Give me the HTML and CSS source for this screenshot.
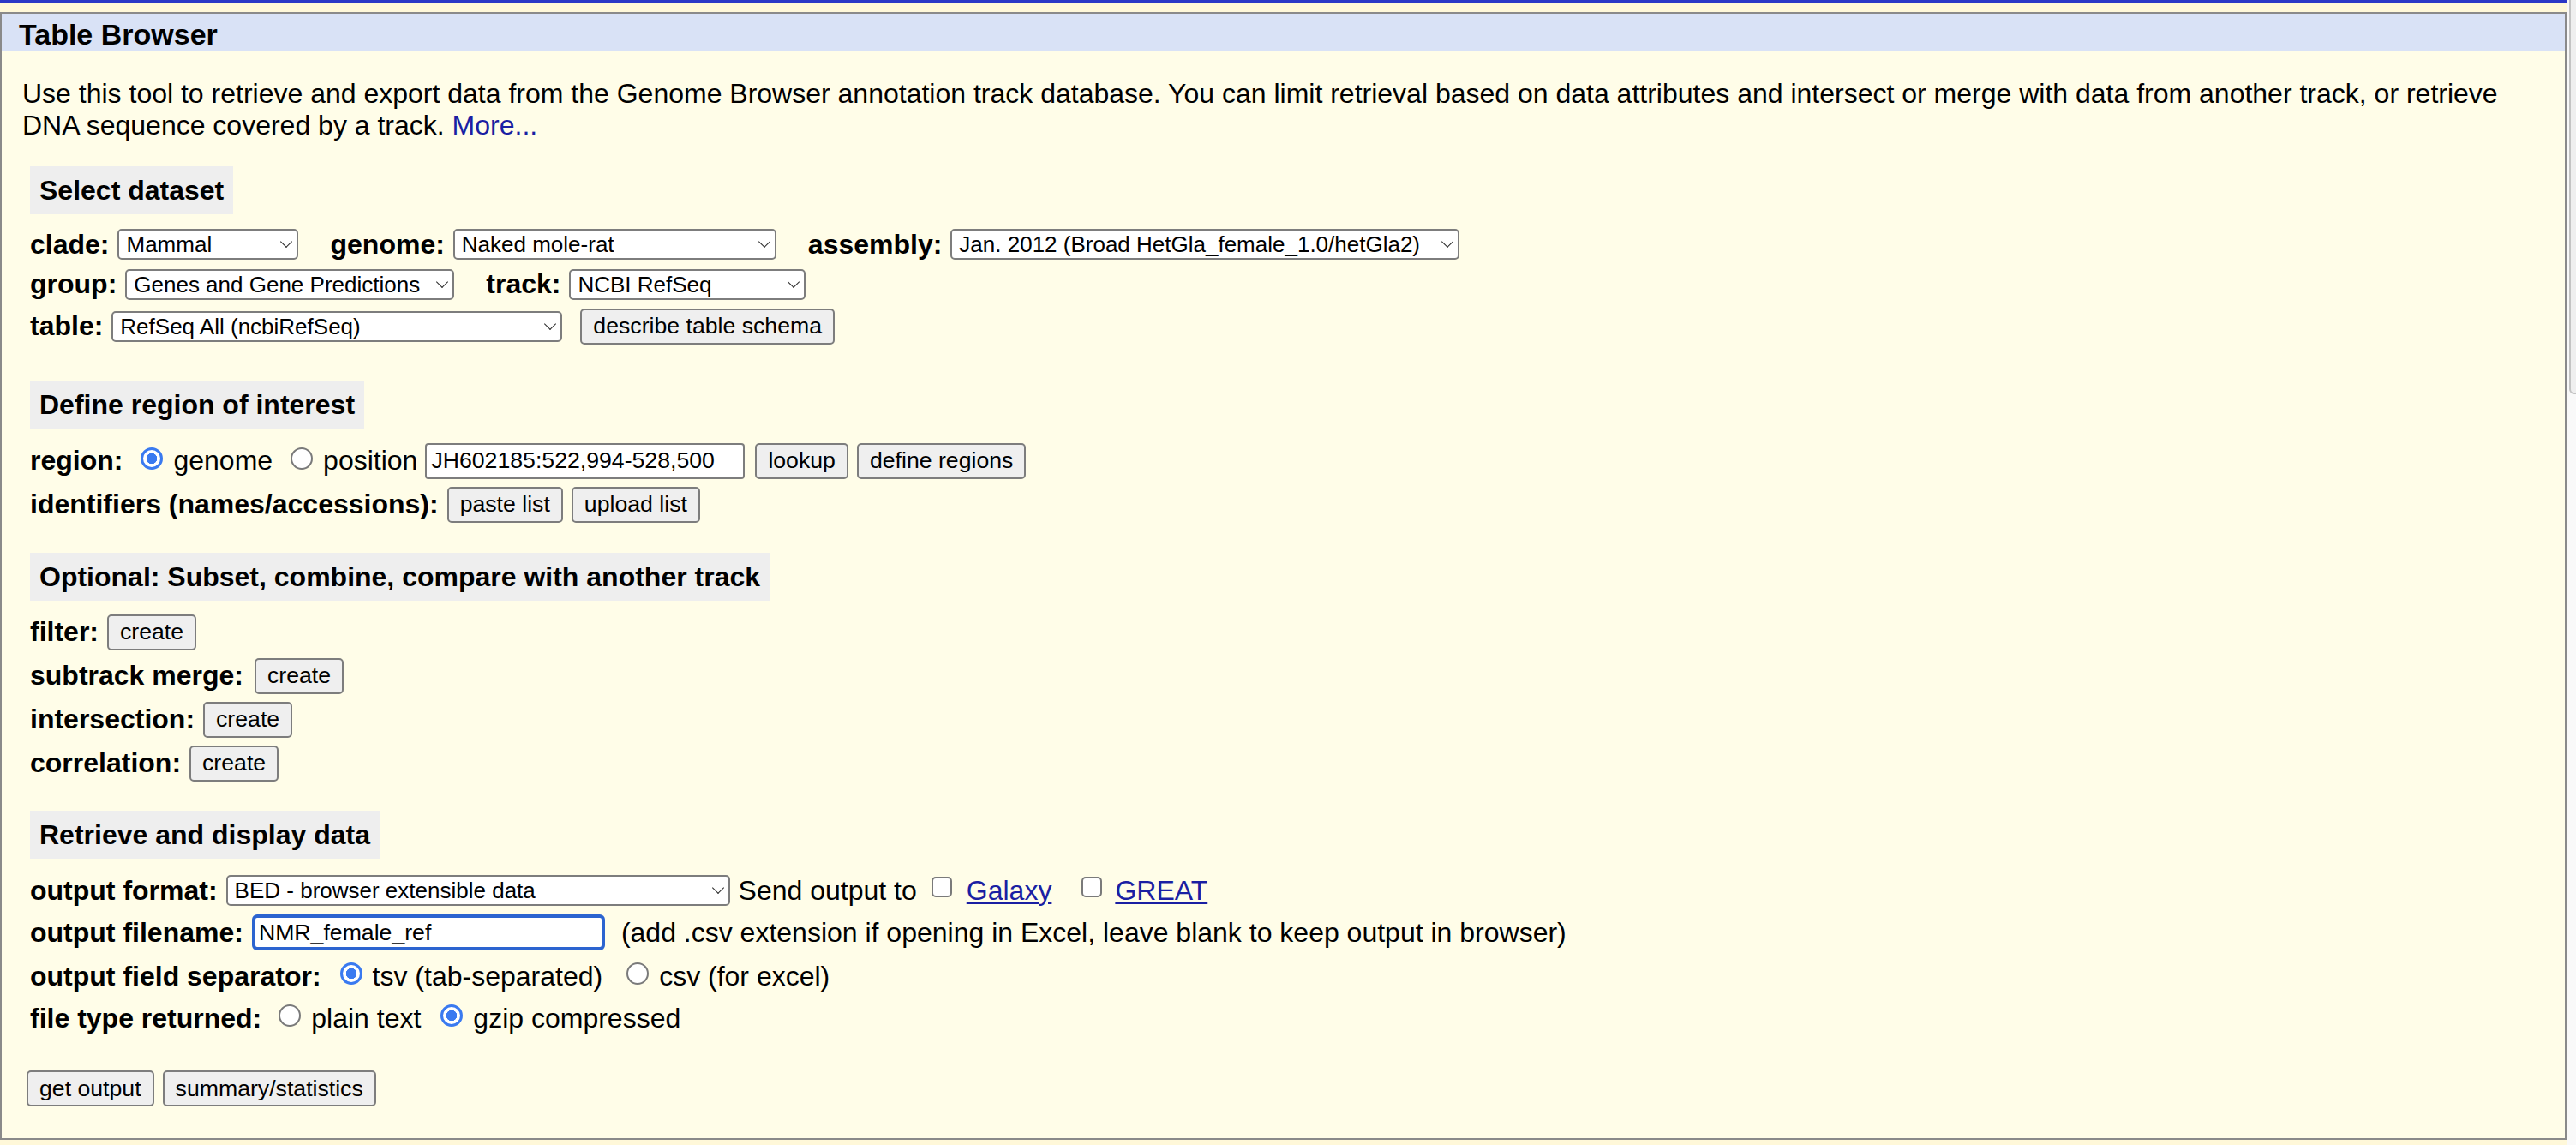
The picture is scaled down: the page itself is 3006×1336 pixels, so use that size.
FILE: index.html
```html
<!DOCTYPE html>
<html lang="en">
<head>
<meta charset="utf-8">
<title>Table Browser</title>
<link rel="stylesheet" href="styles.css">
</head>
<body>
<div class="page">
  <div class="main">
    <div class="topbar"></div>
    <div class="panel">
      <div class="panel-head">Table Browser</div>
      <div class="panel-body">
        <p class="intro">Use this tool to retrieve and export data from the Genome Browser annotation track database. You can limit retrieval based on data attributes and intersect or merge with data from another track, or retrieve DNA sequence covered by a track. <a href="#">More...</a></p>

        <section class="section s1">
          <div class="title">Select dataset</div>
          <div class="rows">
            <div class="row h46">
              <span class="lbl">clade:</span>
              <span class="sel w-clade"><select><option>Mammal</option></select></span>
              <span class="lbl sp">genome:</span>
              <span class="sel w-genome"><select><option>Naked mole-rat</option></select></span>
              <span class="lbl sp">assembly:</span>
              <span class="sel w-assembly"><select><option>Jan. 2012 (Broad HetGla_female_1.0/hetGla2)</option></select></span>
            </div>
            <div class="row h47">
              <span class="lbl">group:</span>
              <span class="sel w-group"><select><option>Genes and Gene Predictions</option></select></span>
              <span class="lbl sp">track:</span>
              <span class="sel w-track"><select><option>NCBI RefSeq</option></select></span>
            </div>
            <div class="row h51">
              <span class="lbl">table:</span>
              <span class="sel w-table"><select><option>RefSeq All (ncbiRefSeq)</option></select></span>
              <button class="btn after-sel" type="button">describe table schema</button>
            </div>
          </div>
        </section>

        <section class="section s2">
          <div class="title">Define region of interest</div>
          <div class="rows">
            <div class="row h51">
              <span class="lbl">region:</span>
              <input class="radio" type="radio" name="region" checked>
              <span class="opt">genome</span>
              <input class="radio radio-pos" type="radio" name="region">
              <span class="opt">position</span>
              <input class="txt w-pos" type="text" value="JH602185:522,994-528,500">
              <button class="btn after-txt" type="button">lookup</button>
              <button class="btn" type="button">define regions</button>
            </div>
            <div class="row h51">
              <span class="lbl">identifiers (names/accessions):</span>
              <button class="btn" type="button">paste list</button>
              <button class="btn" type="button">upload list</button>
            </div>
          </div>
        </section>

        <section class="section s3">
          <div class="title">Optional: Subset, combine, compare with another track</div>
          <div class="rows rows-opt">
            <div class="row h51">
              <span class="lbl">filter:</span>
              <button class="btn" type="button">create</button>
            </div>
            <div class="row h51">
              <span class="lbl lbl-wide">subtrack merge:</span>
              <button class="btn" type="button">create</button>
            </div>
            <div class="row h51">
              <span class="lbl">intersection:</span>
              <button class="btn" type="button">create</button>
            </div>
            <div class="row h51">
              <span class="lbl">correlation:</span>
              <button class="btn" type="button">create</button>
            </div>
          </div>
        </section>

        <section class="section s4">
          <div class="title">Retrieve and display data</div>
          <div class="rows rows-out">
            <div class="row h48">
              <span class="lbl">output format:</span>
              <span class="sel w-format"><select><option>BED - browser extensible data</option></select></span>
              <span class="send">Send output to</span>
              <input class="chk" type="checkbox">
              <a class="ext ext-first" href="#">Galaxy</a>
              <input class="chk chk-tight" type="checkbox">
              <a class="ext" href="#">GREAT</a>
            </div>
            <div class="row h50">
              <span class="lbl">output filename:</span>
              <input class="txt focus" type="text" value="NMR_female_ref">
              <span class="note">(add .csv extension if opening in Excel, leave blank to keep output in browser)</span>
            </div>
            <div class="row h52">
              <span class="lbl">output field separator:</span>
              <input class="radio radio-a" type="radio" name="sep" checked>
              <span class="opt">tsv (tab-separated)</span>
              <input class="radio radio-b" type="radio" name="sep">
              <span class="opt">csv (for excel)</span>
            </div>
            <div class="row h46">
              <span class="lbl">file type returned:</span>
              <input class="radio radio-c" type="radio" name="ftype">
              <span class="opt">plain text</span>
              <input class="radio radio-d" type="radio" name="ftype" checked>
              <span class="opt">gzip compressed</span>
            </div>
          </div>
        </section>

        <div class="actions">
          <button class="btn" type="button">get output</button>
          <button class="btn" type="button">summary/statistics</button>
        </div>
      </div>
    </div>
  </div>
  <div class="scroll"><div class="thumb"></div></div>
</div>
</body>
</html>
```

FILE: styles.css
```css
* { box-sizing: border-box; }

html, body {
  margin: 0;
  padding: 0;
}

body {
  background: #fff8d9;
  color: #000;
  font-family: "Liberation Sans", Arial, Helvetica, sans-serif;
  font-size: 32px;
}

.page {
  display: flex;
  height: 100vh;
}

.main {
  flex: 1;
  min-width: 0;
  display: flex;
  flex-direction: column;
}

.topbar {
  flex: none;
  height: 4px;
  background: #2b37c6;
}

.panel {
  flex: 1;
  margin: 10px 0 6px;
  border: 2px solid #8a8a8a;
  background: #fffde8;
  overflow: hidden;
}

.panel-head {
  height: 44px;
  padding: 4px 0 0 20px;
  background: #d9e2f6;
  font-size: 34px;
  font-weight: bold;
  line-height: 40px;
}

.panel-body {
  padding: 0 22px 0 24px;
}

.intro {
  margin: 31px 0 0;
  line-height: normal;
}

a { color: #1a1fa3; }
.intro a { text-decoration: none; }

.section { margin-left: 9px; }
.s1 { margin-top: 29px; }
.s2 { margin-top: 38px; }
.s3 { margin-top: 31px; }
.s4 { margin-top: 30px; }

.title {
  width: fit-content;
  height: 56px;
  padding: 0 11px;
  background: #eeeeee;
  font-weight: bold;
  line-height: 56px;
  white-space: nowrap;
}

.rows { margin-top: 12px; }
.rows-opt { margin-top: 11px; }
.rows-out { margin-top: 13px; }

.row {
  display: flex;
  align-items: center;
  white-space: nowrap;
}
.h46 { height: 46px; }
.h47 { height: 47px; }
.h48 { height: 48px; }
.h50 { height: 50px; }
.h51 { height: 51px; }
.h52 { height: 52px; }

.lbl {
  font-weight: bold;
  margin-right: 10px;
}
.lbl.sp { margin-left: 37px; }
.lbl-wide { margin-right: 13px; }

/* selects */
.sel {
  position: relative;
  flex: none;
  height: 36px;
}
.sel select {
  -webkit-appearance: none;
  appearance: none;
  display: block;
  width: 100%;
  height: 100%;
  margin: 0;
  padding: 0 24px 0 8px;
  border: 2px solid #7d7d7d;
  border-radius: 5px;
  background: #fff;
  color: #000;
  font-family: "Liberation Sans", Arial, Helvetica, sans-serif;
  font-size: 26px;
}
.sel::after {
  content: "";
  position: absolute;
  right: 9px;
  top: 10px;
  width: 9px;
  height: 9px;
  border-right: 1.5px solid #2a2a2a;
  border-bottom: 1.5px solid #2a2a2a;
  transform: rotate(45deg);
  pointer-events: none;
}
.w-clade { width: 211px; }
.w-genome { width: 377px; }
.w-assembly { width: 594px; }
.w-group { width: 384px; }
.w-track { width: 276px; }
.w-table { width: 526px; }
.w-format { width: 588px; }

/* buttons */
.btn {
  flex: none;
  height: 42px;
  margin: 0;
  padding: 0 13px;
  border: 2px solid #7d7d7d;
  border-radius: 5px;
  background: #efefef;
  color: #000;
  font-family: "Liberation Sans", Arial, Helvetica, sans-serif;
  font-size: 26.67px;
}
.btn + .btn { margin-left: 10px; }
.btn.after-sel { margin-left: 21px; }
.btn.after-txt { margin-left: 12px; }

/* text inputs */
.txt {
  flex: none;
  height: 42px;
  margin: 0;
  padding: 0 5px;
  border: 2px solid #7d7d7d;
  border-radius: 4px;
  background: #fff;
  color: #000;
  font-family: "Liberation Sans", Arial, Helvetica, sans-serif;
  font-size: 26.67px;
}
.w-pos { width: 373px; margin-left: 9px; }
.txt.focus {
  width: 412px;
  padding: 0 4px;
  border: 4px solid #2c64d0;
  border-radius: 6px;
  outline: none;
}

/* radios and checkboxes */
.radio {
  -webkit-appearance: none;
  appearance: none;
  flex: none;
  width: 26px;
  height: 26px;
  margin: 0 12px 6px 11px;
  border: 2px solid #7a7a7a;
  border-radius: 50%;
  background: #fff;
}
.radio:checked {
  border: 3px solid #3a7af0;
  background: radial-gradient(circle, #3a7af0 0 6px, #fff 6.5px);
}
.radio-pos { margin-left: 21px; }
.radio-a { margin-left: 12px; }
.radio-b { margin-left: 28px; }
.radio-c { margin-left: 10px; }
.radio-d { margin-left: 23px; }

.chk {
  -webkit-appearance: none;
  appearance: none;
  flex: none;
  width: 24px;
  height: 24px;
  margin: 0 17px 8px 17px;
  border: 2px solid #7a7a7a;
  border-radius: 5px;
  background: #fff;
}
.chk-tight { margin-right: 15px; }

.send { margin-left: 10px; }
.ext-first { margin-right: 18px; }
.note { margin-left: 19px; }

.actions {
  display: flex;
  align-items: center;
  margin: 38px 0 0 5px;
}

/* scrollbar gutter */
.scroll {
  flex: none;
  width: 11px;
  background: #f9f9f9;
}
.thumb {
  width: 8px;
  height: 460px;
  margin-left: 3px;
  border-left: 2px solid #c4c4c4;
  border-bottom: 2px solid #c4c4c4;
  border-radius: 0 0 0 6px;
  background: #efefef;
}
```
